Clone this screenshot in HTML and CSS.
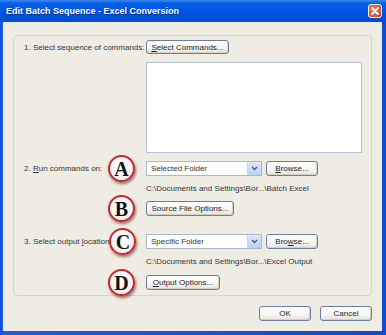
FILE: index.html
```html
<!DOCTYPE html>
<html>
<head>
<meta charset="utf-8">
<link rel="stylesheet" href="styles.css">
</head>
<body>
<div class="window">
  <div class="titlebar">
    <span class="title">Edit Batch Sequence - Excel Conversion</span>
    <span class="close"><svg width="8" height="8" viewBox="0 0 8 8"><path d="M1 1L7 7M7 1L1 7" stroke="#fff" stroke-width="1.8" stroke-linecap="round"/></svg></span>
  </div>
  <div class="client">
    <div class="group">
      <div class="row r1">
        <div class="lab"><span>1. Select sequence of commands:</span></div>
        <div class="ctl"><button class="btn w-select"><u>S</u>elect Commands...</button></div>
      </div>
      <div class="row r2">
        <div class="lab"></div>
        <div class="ctl"><div class="listbox"></div></div>
      </div>
      <div class="row r3">
        <div class="lab"><span>2. <u>R</u>un commands on:</span><span class="badge">A</span></div>
        <div class="ctl">
          <div class="combo"><span>Selected Folder</span><span class="arrow"><svg width="7" height="5" viewBox="0 0 7 5"><path d="M1 1L3.5 3.5L6 1" stroke="#4d6185" stroke-width="1.5" fill="none"/></svg></span></div>
          <button class="btn w-browse"><u>B</u>rowse...</button>
        </div>
      </div>
      <div class="row r4">
        <div class="lab"></div>
        <div class="ctl"><span class="path">C:\Documents and Settings\Bor...\Batch Excel</span></div>
      </div>
      <div class="row r5">
        <div class="lab end"><span class="badge">B</span></div>
        <div class="ctl"><button class="btn w-source">Source File Options...</button></div>
      </div>
      <div class="row r6">
        <div class="lab"><span>3. Select output <u>l</u>ocation</span><span class="badge">C</span></div>
        <div class="ctl">
          <div class="combo"><span>Specific Folder</span><span class="arrow"><svg width="7" height="5" viewBox="0 0 7 5"><path d="M1 1L3.5 3.5L6 1" stroke="#4d6185" stroke-width="1.5" fill="none"/></svg></span></div>
          <button class="btn w-browse">Bro<u>w</u>se...</button>
        </div>
      </div>
      <div class="row r7">
        <div class="lab"></div>
        <div class="ctl"><span class="path">C:\Documents and Settings\Bor...\Excel Output</span></div>
      </div>
      <div class="row r8">
        <div class="lab end"><span class="badge">D</span></div>
        <div class="ctl"><button class="btn w-output"><u>O</u>utput Options...</button></div>
      </div>
    </div>
    <div class="footer">
      <button class="btn w-ok">OK</button>
      <button class="btn w-ok">Cancel</button>
    </div>
  </div>
</div>
</body>
</html>
```

FILE: styles.css
```css
* { box-sizing: border-box; }
html, body { margin: 0; padding: 0; background: #fff; }
body { font-family: "Liberation Sans", Arial, sans-serif; font-size: 8px; color: #333; }

.window {
  width: 386px; height: 335px;
  display: flex; flex-direction: column;
  background: linear-gradient(90deg, #0a4fd6 0, #1a5ee0 2px, #0b4cd0 100%);
}
.titlebar {
  height: 22px;
  display: flex; align-items: center; justify-content: space-between;
  padding: 0 4px 0 6px;
  background: linear-gradient(#3d8bf2 0, #0a5fe6 3px, #0055e3 45%, #0050db 80%, #0a49c6 100%);
}
.title { color: #fff; font-weight: bold; font-size: 9px; text-shadow: 1px 1px 0 #0a2f8a; }
.close {
  width: 14px; height: 14px;
  display: flex; align-items: center; justify-content: center;
  border: 1px solid #fff; border-radius: 3px;
  background: radial-gradient(circle at 40% 40%, #f28a64 0, #e5593a 50%, #c23c1c 100%);
}
.client {
  flex: 1;
  margin: 0 4px 4px 3px;
  background: #efede3;
  padding: 13px 10px 0 10px;
}
.group {
  border: 1px solid #d8d6ca; border-radius: 4px;
  padding: 4px 9px 5px 10px;
  display: flex; flex-direction: column;
}
.row { display: flex; align-items: center; }
.lab { width: 122px; display: flex; align-items: center; justify-content: space-between; white-space: nowrap; }
.lab.end { justify-content: flex-end; }
.ctl { width: 216px; display: flex; align-items: center; }

.r1 { height: 14px; }
.r2 { margin-top: 8px; }
.r3 { margin-top: 8px; height: 15px; }
.r4 { margin-top: 7px; height: 11px; }
.r5 { margin-top: 7px; height: 15px; }
.r6 { margin-top: 18px; height: 15px; }
.r7 { margin-top: 7px; height: 11px; }
.r8 { margin-top: 8px; height: 15px; }

.r3 .lab { padding-right: 11px; }
.r6 .lab { padding-right: 12px; }
.r5 .lab, .r8 .lab { padding-right: 11px; }

.listbox { width: 216px; height: 91px; background: #fff; border: 1px solid #b4c2d3; }

.btn {
  font-family: inherit; font-size: 8px; color: #222;
  height: 15px; padding: 0;
  border: 1px solid #6a7f9e; border-radius: 3px;
  background: linear-gradient(#ffffff 0, #f6f5f0 60%, #e3e2da 100%);
  box-shadow: inset -1px -1px 0 #d6d0c0;
  display: flex; align-items: center; justify-content: center;
}
.btn u { text-decoration: underline; }
.w-select { width: 83px; height: 14px; }
.w-browse { width: 52px; margin-left: 4px; }
.w-source { width: 88px; }
.w-output { width: 74px; }
.w-ok { width: 52px; }

.combo {
  width: 116px; height: 15px;
  border: 1px solid #a9b8cb; background: #fff;
  display: flex; align-items: center; justify-content: space-between;
  padding-left: 4px;
}
.arrow {
  width: 14px; height: 13px;
  background: linear-gradient(#dde9fb, #b9cff3);
  border-left: 1px solid #c6d6ef;
  display: flex; align-items: center; justify-content: center;
}
.path { white-space: nowrap; }

.badge {
  width: 27px; height: 27px; margin: -6px 0;
  border-radius: 50%;
  background: radial-gradient(circle at 45% 40%, #ffffff 0, #f8f4f4 55%, #ebe1e1 100%);
  border: 2px solid #c8262c;
  box-shadow: 1px 2px 3px rgba(60,10,10,0.55);
  display: flex; align-items: center; justify-content: center;
  font-family: "Liberation Serif", "Times New Roman", serif;
  font-weight: bold; font-size: 20px; color: #111; line-height: 1;
  flex: none;
}

.footer {
  margin-top: 10px;
  display: flex; justify-content: flex-end; gap: 9px;
}
```
